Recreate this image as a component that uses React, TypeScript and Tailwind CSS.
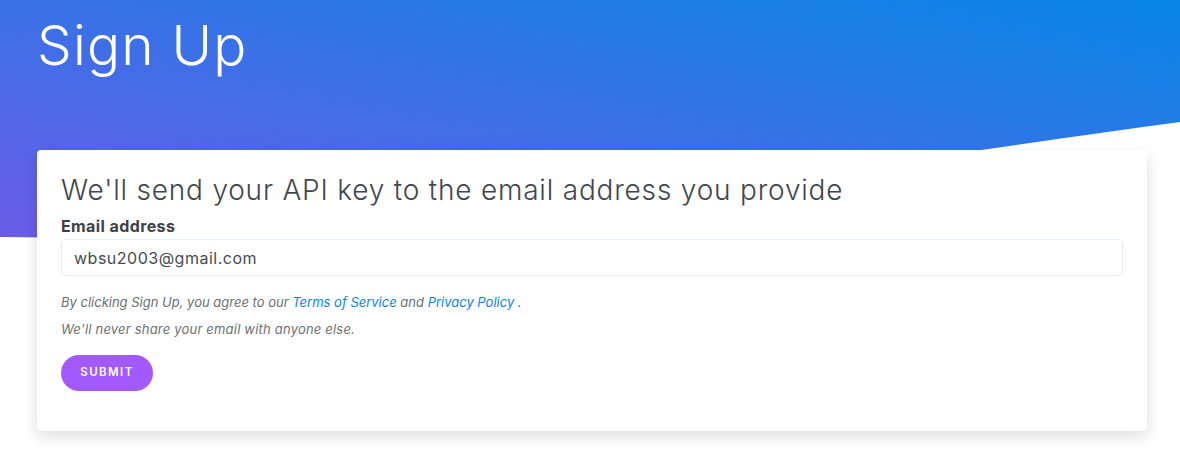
import React from 'react';

const font = { fontFamily: 'Inter, "DejaVu Sans", sans-serif' };

export default function App() {
  return (
    <div className="relative min-h-[464px] w-full bg-white overflow-hidden" style={font}>
      {/* wavy gradient backdrop */}
      <svg
        className="absolute left-0 top-0 w-full h-[240px]"
        viewBox="0 0 1180 240"
        preserveAspectRatio="none"
      >
        <defs>
          <linearGradient id="hero" x1="0" y1="1" x2="1" y2="0">
            <stop offset="0" stopColor="#6c5ce7" />
            <stop offset="1" stopColor="#0786e7" />
          </linearGradient>
        </defs>
        <path d="M0,0 H1180 V122 C900,160 600,210 300,232 C180,239 80,238 0,237 Z" fill="url(#hero)" />
      </svg>

      <div className="relative">
        <h1 className="pl-[37px] pt-[17px] text-[55px] leading-[56px] font-light text-white tracking-[1.2px]">
          Sign Up
        </h1>

        <div className="ml-[37px] mr-[33px] mt-[77px] rounded-[4px] bg-white px-6 pt-[23px] pb-10 shadow-[0_6px_16px_rgba(0,0,0,0.13)]">
          <h2 className="text-[28px] leading-[34px] font-light text-[#41474e] tracking-[0.8px] mb-[7px]">
            We'll send your API key to the email address you provide
          </h2>
          <label className="block text-[16px] leading-6 font-bold text-[#3d4248] tracking-[0.4px] mb-px">Email address</label>
          <input
            readOnly
            value="wbsu2003@gmail.com"
            className="block w-full h-[37px] rounded-[4px] border border-[#e1ecf6] px-3 text-[16px] tracking-[0.5px] text-[#454b52] outline-none"
            style={font}
          />
          <p className="mt-4 text-[13px] leading-5 italic text-[#6b7077]">
            By clicking Sign Up, you agree to our{' '}
            <a className="text-[#0b84f5]">Terms of Service</a> and{' '}
            <a className="text-[#0b84f5]">Privacy Policy</a> .
          </p>
          <p className="mt-[7px] text-[13px] leading-5 italic text-[#6b7077] tracking-[0.2px]">
            We'll never share your email with anyone else.
          </p>
          <button className="mt-4 h-9 w-[92px] rounded-full bg-[#a259fe] text-[11.5px] font-semibold tracking-[1.4px] text-white">
            SUBMIT
          </button>
        </div>
      </div>
    </div>
  );
}
